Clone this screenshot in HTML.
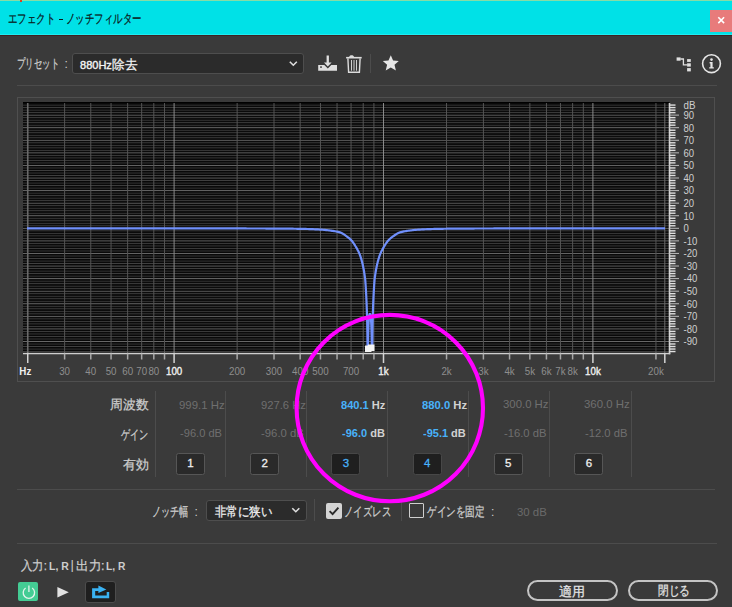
<!DOCTYPE html>
<html><head><meta charset="utf-8">
<style>
*{margin:0;padding:0;box-sizing:border-box}
html,body{width:732px;height:607px;overflow:hidden;background:#3a3a3a;font-family:"Liberation Sans",sans-serif}
.a{position:absolute;white-space:nowrap;line-height:normal}
.sep{position:absolute;background:#4c4c4c}
</style></head><body>
<div class="a" style="left:0;top:0;width:732px;height:1.5px;background:#86dca6"></div>
<div class="a" style="left:0;top:1px;width:732px;height:34px;background:#00e1e7"></div>
<div class="a" style="left:0;top:34px;width:732px;height:1px;background:#20eaf0"></div>
<div class="a" style="left:0;top:35px;width:732px;height:1px;background:#3d2222"></div>
<div class="a" style="left:19.5px;top:0;width:2px;height:1.5px;background:#e04020"></div>
<div class="a" style="left:710px;top:10px;width:22px;height:22px;background:#e87b7b"></div>
<svg class="a" style="left:710px;top:10px" width="22" height="22"><path d="M8.3 7.3 L14.1 13.1 M14.1 7.3 L8.3 13.1" stroke="#fff" stroke-width="1.6"/></svg>
<div class="a" style="left:72px;top:53px;width:232px;height:20.5px;background:#2b2b2b;border:1px solid #4e4e4e;border-radius:3px"></div>
<svg class="a" style="left:286px;top:57px" width="14" height="12"><path d="M3.8 4.8 L7.3 8.2 L10.8 4.8" fill="none" stroke="#dedede" stroke-width="1.6"/></svg>
<svg class="a" style="left:316px;top:53px" width="50" height="22">
 <path d="M10.6 2.4 H12.9 V9.5 H15.6 L11.8 13.4 L8 9.5 H10.6 Z" fill="#e0e0e0"/>
 <path d="M2.2 11.9 H8.3 L11.8 15.4 L15.3 11.9 H21 V17.7 H2.2 Z" fill="#e0e0e0"/>
 <rect x="4.2" y="13.3" width="1.6" height="1.6" fill="#3b3b3b"/>
 <path d="M33.2 4.2 C33.2 1.6 38 1.6 38 4.2 Z" fill="#dcdcdc"/>
 <rect x="30.1" y="3.9" width="15.6" height="1.6" fill="#dcdcdc"/>
 <path d="M31.9 5.4 L32.6 19.3 H43.4 L44.1 5.4" fill="none" stroke="#dcdcdc" stroke-width="1.4"/>
 <path d="M35.5 7 V17.7 M38 7 V17.7 M40.5 7 V17.7" stroke="#d0d0d0" stroke-width="1"/>
</svg>
<div class="sep" style="left:370px;top:54px;width:1px;height:19px"></div>
<svg class="a" style="left:380px;top:53px" width="22" height="22"><path d="M10.8 2.2 L13.1 7.6 L18.8 8.0 L14.5 11.7 L15.9 17.6 L10.8 14.4 L5.7 17.6 L7.1 11.7 L2.8 8.0 L8.5 7.6 Z" fill="#e6e6e6"/></svg>
<svg class="a" style="left:672px;top:53px" width="56" height="24">
 <rect x="4.6" y="4.4" width="4" height="3.3" fill="#e0e0e0"/>
 <path d="M8.4 6 H11.4 V11.8 H15.2" fill="none" stroke="#e0e0e0" stroke-width="1.3"/>
 <rect x="15.1" y="6.1" width="3.7" height="2.8" fill="#e0e0e0"/>
 <rect x="15.1" y="10.3" width="3.7" height="3.3" fill="#e0e0e0"/>
 <rect x="15.1" y="15.1" width="3.7" height="3.3" fill="#e0e0e0"/>
 <circle cx="39.5" cy="10.7" r="8.9" fill="none" stroke="#e6e6e6" stroke-width="1.6"/>
 <circle cx="39.5" cy="6.6" r="1.3" fill="#e6e6e6"/>
 <path d="M37.6 9 H40.6 V14.2 H41.8 V15.6 H37.2 V14.2 H38.4 V10.4 H37.6 Z" fill="#e6e6e6"/>
</svg>
<div class="sep" style="left:17px;top:84.5px;width:700px;height:1px"></div>
<div class="a" style="left:17px;top:97px;width:698px;height:285px;border:1px solid #4f4f4f"></div>
<svg class="a" style="left:0;top:0" width="732" height="607" font-family="Liberation Sans, sans-serif">
<rect x="23.0" y="102.0" width="646.5" height="251.5" fill="#000"/>
<line x1="23.0" x2="669.5" y1="352.79" y2="352.79" stroke="#0c0c0c" stroke-width="1"/>
<line x1="23.0" x2="669.5" y1="351.54" y2="351.54" stroke="#404040" stroke-width="1"/>
<line x1="23.0" x2="669.5" y1="350.28" y2="350.28" stroke="#0c0c0c" stroke-width="1"/>
<line x1="23.0" x2="669.5" y1="349.02" y2="349.02" stroke="#404040" stroke-width="1"/>
<line x1="23.0" x2="669.5" y1="347.76" y2="347.76" stroke="#0c0c0c" stroke-width="1"/>
<line x1="23.0" x2="669.5" y1="346.50" y2="346.50" stroke="#404040" stroke-width="1"/>
<line x1="23.0" x2="669.5" y1="345.25" y2="345.25" stroke="#0c0c0c" stroke-width="1"/>
<line x1="23.0" x2="669.5" y1="343.99" y2="343.99" stroke="#404040" stroke-width="1"/>
<line x1="23.0" x2="669.5" y1="342.73" y2="342.73" stroke="#0c0c0c" stroke-width="1"/>
<line x1="23.0" x2="669.5" y1="341.48" y2="341.48" stroke="#6a6a6a" stroke-width="1"/>
<line x1="23.0" x2="669.5" y1="340.22" y2="340.22" stroke="#0c0c0c" stroke-width="1"/>
<line x1="23.0" x2="669.5" y1="338.96" y2="338.96" stroke="#404040" stroke-width="1"/>
<line x1="23.0" x2="669.5" y1="337.70" y2="337.70" stroke="#0c0c0c" stroke-width="1"/>
<line x1="23.0" x2="669.5" y1="336.45" y2="336.45" stroke="#404040" stroke-width="1"/>
<line x1="23.0" x2="669.5" y1="335.19" y2="335.19" stroke="#0c0c0c" stroke-width="1"/>
<line x1="23.0" x2="669.5" y1="333.93" y2="333.93" stroke="#404040" stroke-width="1"/>
<line x1="23.0" x2="669.5" y1="332.67" y2="332.67" stroke="#0c0c0c" stroke-width="1"/>
<line x1="23.0" x2="669.5" y1="331.42" y2="331.42" stroke="#404040" stroke-width="1"/>
<line x1="23.0" x2="669.5" y1="330.16" y2="330.16" stroke="#0c0c0c" stroke-width="1"/>
<line x1="23.0" x2="669.5" y1="328.90" y2="328.90" stroke="#6a6a6a" stroke-width="1"/>
<line x1="23.0" x2="669.5" y1="327.64" y2="327.64" stroke="#0c0c0c" stroke-width="1"/>
<line x1="23.0" x2="669.5" y1="326.38" y2="326.38" stroke="#404040" stroke-width="1"/>
<line x1="23.0" x2="669.5" y1="325.13" y2="325.13" stroke="#0c0c0c" stroke-width="1"/>
<line x1="23.0" x2="669.5" y1="323.87" y2="323.87" stroke="#404040" stroke-width="1"/>
<line x1="23.0" x2="669.5" y1="322.61" y2="322.61" stroke="#0c0c0c" stroke-width="1"/>
<line x1="23.0" x2="669.5" y1="321.36" y2="321.36" stroke="#404040" stroke-width="1"/>
<line x1="23.0" x2="669.5" y1="320.10" y2="320.10" stroke="#0c0c0c" stroke-width="1"/>
<line x1="23.0" x2="669.5" y1="318.84" y2="318.84" stroke="#404040" stroke-width="1"/>
<line x1="23.0" x2="669.5" y1="317.58" y2="317.58" stroke="#0c0c0c" stroke-width="1"/>
<line x1="23.0" x2="669.5" y1="316.33" y2="316.33" stroke="#6a6a6a" stroke-width="1"/>
<line x1="23.0" x2="669.5" y1="315.07" y2="315.07" stroke="#0c0c0c" stroke-width="1"/>
<line x1="23.0" x2="669.5" y1="313.81" y2="313.81" stroke="#404040" stroke-width="1"/>
<line x1="23.0" x2="669.5" y1="312.55" y2="312.55" stroke="#0c0c0c" stroke-width="1"/>
<line x1="23.0" x2="669.5" y1="311.30" y2="311.30" stroke="#404040" stroke-width="1"/>
<line x1="23.0" x2="669.5" y1="310.04" y2="310.04" stroke="#0c0c0c" stroke-width="1"/>
<line x1="23.0" x2="669.5" y1="308.78" y2="308.78" stroke="#404040" stroke-width="1"/>
<line x1="23.0" x2="669.5" y1="307.52" y2="307.52" stroke="#0c0c0c" stroke-width="1"/>
<line x1="23.0" x2="669.5" y1="306.26" y2="306.26" stroke="#404040" stroke-width="1"/>
<line x1="23.0" x2="669.5" y1="305.01" y2="305.01" stroke="#0c0c0c" stroke-width="1"/>
<line x1="23.0" x2="669.5" y1="303.75" y2="303.75" stroke="#6a6a6a" stroke-width="1"/>
<line x1="23.0" x2="669.5" y1="302.49" y2="302.49" stroke="#0c0c0c" stroke-width="1"/>
<line x1="23.0" x2="669.5" y1="301.24" y2="301.24" stroke="#404040" stroke-width="1"/>
<line x1="23.0" x2="669.5" y1="299.98" y2="299.98" stroke="#0c0c0c" stroke-width="1"/>
<line x1="23.0" x2="669.5" y1="298.72" y2="298.72" stroke="#404040" stroke-width="1"/>
<line x1="23.0" x2="669.5" y1="297.46" y2="297.46" stroke="#0c0c0c" stroke-width="1"/>
<line x1="23.0" x2="669.5" y1="296.21" y2="296.21" stroke="#404040" stroke-width="1"/>
<line x1="23.0" x2="669.5" y1="294.95" y2="294.95" stroke="#0c0c0c" stroke-width="1"/>
<line x1="23.0" x2="669.5" y1="293.69" y2="293.69" stroke="#404040" stroke-width="1"/>
<line x1="23.0" x2="669.5" y1="292.43" y2="292.43" stroke="#0c0c0c" stroke-width="1"/>
<line x1="23.0" x2="669.5" y1="291.18" y2="291.18" stroke="#6a6a6a" stroke-width="1"/>
<line x1="23.0" x2="669.5" y1="289.92" y2="289.92" stroke="#0c0c0c" stroke-width="1"/>
<line x1="23.0" x2="669.5" y1="288.66" y2="288.66" stroke="#404040" stroke-width="1"/>
<line x1="23.0" x2="669.5" y1="287.40" y2="287.40" stroke="#0c0c0c" stroke-width="1"/>
<line x1="23.0" x2="669.5" y1="286.15" y2="286.15" stroke="#404040" stroke-width="1"/>
<line x1="23.0" x2="669.5" y1="284.89" y2="284.89" stroke="#0c0c0c" stroke-width="1"/>
<line x1="23.0" x2="669.5" y1="283.63" y2="283.63" stroke="#404040" stroke-width="1"/>
<line x1="23.0" x2="669.5" y1="282.37" y2="282.37" stroke="#0c0c0c" stroke-width="1"/>
<line x1="23.0" x2="669.5" y1="281.12" y2="281.12" stroke="#404040" stroke-width="1"/>
<line x1="23.0" x2="669.5" y1="279.86" y2="279.86" stroke="#0c0c0c" stroke-width="1"/>
<line x1="23.0" x2="669.5" y1="278.60" y2="278.60" stroke="#6a6a6a" stroke-width="1"/>
<line x1="23.0" x2="669.5" y1="277.34" y2="277.34" stroke="#0c0c0c" stroke-width="1"/>
<line x1="23.0" x2="669.5" y1="276.09" y2="276.09" stroke="#404040" stroke-width="1"/>
<line x1="23.0" x2="669.5" y1="274.83" y2="274.83" stroke="#0c0c0c" stroke-width="1"/>
<line x1="23.0" x2="669.5" y1="273.57" y2="273.57" stroke="#404040" stroke-width="1"/>
<line x1="23.0" x2="669.5" y1="272.31" y2="272.31" stroke="#0c0c0c" stroke-width="1"/>
<line x1="23.0" x2="669.5" y1="271.06" y2="271.06" stroke="#404040" stroke-width="1"/>
<line x1="23.0" x2="669.5" y1="269.80" y2="269.80" stroke="#0c0c0c" stroke-width="1"/>
<line x1="23.0" x2="669.5" y1="268.54" y2="268.54" stroke="#404040" stroke-width="1"/>
<line x1="23.0" x2="669.5" y1="267.28" y2="267.28" stroke="#0c0c0c" stroke-width="1"/>
<line x1="23.0" x2="669.5" y1="266.03" y2="266.03" stroke="#6a6a6a" stroke-width="1"/>
<line x1="23.0" x2="669.5" y1="264.77" y2="264.77" stroke="#0c0c0c" stroke-width="1"/>
<line x1="23.0" x2="669.5" y1="263.51" y2="263.51" stroke="#404040" stroke-width="1"/>
<line x1="23.0" x2="669.5" y1="262.25" y2="262.25" stroke="#0c0c0c" stroke-width="1"/>
<line x1="23.0" x2="669.5" y1="261.00" y2="261.00" stroke="#404040" stroke-width="1"/>
<line x1="23.0" x2="669.5" y1="259.74" y2="259.74" stroke="#0c0c0c" stroke-width="1"/>
<line x1="23.0" x2="669.5" y1="258.48" y2="258.48" stroke="#404040" stroke-width="1"/>
<line x1="23.0" x2="669.5" y1="257.22" y2="257.22" stroke="#0c0c0c" stroke-width="1"/>
<line x1="23.0" x2="669.5" y1="255.97" y2="255.97" stroke="#404040" stroke-width="1"/>
<line x1="23.0" x2="669.5" y1="254.71" y2="254.71" stroke="#0c0c0c" stroke-width="1"/>
<line x1="23.0" x2="669.5" y1="253.45" y2="253.45" stroke="#6a6a6a" stroke-width="1"/>
<line x1="23.0" x2="669.5" y1="252.19" y2="252.19" stroke="#0c0c0c" stroke-width="1"/>
<line x1="23.0" x2="669.5" y1="250.94" y2="250.94" stroke="#404040" stroke-width="1"/>
<line x1="23.0" x2="669.5" y1="249.68" y2="249.68" stroke="#0c0c0c" stroke-width="1"/>
<line x1="23.0" x2="669.5" y1="248.42" y2="248.42" stroke="#404040" stroke-width="1"/>
<line x1="23.0" x2="669.5" y1="247.16" y2="247.16" stroke="#0c0c0c" stroke-width="1"/>
<line x1="23.0" x2="669.5" y1="245.91" y2="245.91" stroke="#404040" stroke-width="1"/>
<line x1="23.0" x2="669.5" y1="244.65" y2="244.65" stroke="#0c0c0c" stroke-width="1"/>
<line x1="23.0" x2="669.5" y1="243.39" y2="243.39" stroke="#404040" stroke-width="1"/>
<line x1="23.0" x2="669.5" y1="242.13" y2="242.13" stroke="#0c0c0c" stroke-width="1"/>
<line x1="23.0" x2="669.5" y1="240.88" y2="240.88" stroke="#6a6a6a" stroke-width="1"/>
<line x1="23.0" x2="669.5" y1="239.62" y2="239.62" stroke="#0c0c0c" stroke-width="1"/>
<line x1="23.0" x2="669.5" y1="238.36" y2="238.36" stroke="#404040" stroke-width="1"/>
<line x1="23.0" x2="669.5" y1="237.10" y2="237.10" stroke="#0c0c0c" stroke-width="1"/>
<line x1="23.0" x2="669.5" y1="235.84" y2="235.84" stroke="#404040" stroke-width="1"/>
<line x1="23.0" x2="669.5" y1="234.59" y2="234.59" stroke="#0c0c0c" stroke-width="1"/>
<line x1="23.0" x2="669.5" y1="233.33" y2="233.33" stroke="#404040" stroke-width="1"/>
<line x1="23.0" x2="669.5" y1="232.07" y2="232.07" stroke="#0c0c0c" stroke-width="1"/>
<line x1="23.0" x2="669.5" y1="230.81" y2="230.81" stroke="#404040" stroke-width="1"/>
<line x1="23.0" x2="669.5" y1="229.56" y2="229.56" stroke="#0c0c0c" stroke-width="1"/>
<line x1="23.0" x2="669.5" y1="228.30" y2="228.30" stroke="#6a6a6a" stroke-width="1"/>
<line x1="23.0" x2="669.5" y1="227.04" y2="227.04" stroke="#0c0c0c" stroke-width="1"/>
<line x1="23.0" x2="669.5" y1="225.79" y2="225.79" stroke="#404040" stroke-width="1"/>
<line x1="23.0" x2="669.5" y1="224.53" y2="224.53" stroke="#0c0c0c" stroke-width="1"/>
<line x1="23.0" x2="669.5" y1="223.27" y2="223.27" stroke="#404040" stroke-width="1"/>
<line x1="23.0" x2="669.5" y1="222.01" y2="222.01" stroke="#0c0c0c" stroke-width="1"/>
<line x1="23.0" x2="669.5" y1="220.76" y2="220.76" stroke="#404040" stroke-width="1"/>
<line x1="23.0" x2="669.5" y1="219.50" y2="219.50" stroke="#0c0c0c" stroke-width="1"/>
<line x1="23.0" x2="669.5" y1="218.24" y2="218.24" stroke="#404040" stroke-width="1"/>
<line x1="23.0" x2="669.5" y1="216.98" y2="216.98" stroke="#0c0c0c" stroke-width="1"/>
<line x1="23.0" x2="669.5" y1="215.73" y2="215.73" stroke="#6a6a6a" stroke-width="1"/>
<line x1="23.0" x2="669.5" y1="214.47" y2="214.47" stroke="#0c0c0c" stroke-width="1"/>
<line x1="23.0" x2="669.5" y1="213.21" y2="213.21" stroke="#404040" stroke-width="1"/>
<line x1="23.0" x2="669.5" y1="211.95" y2="211.95" stroke="#0c0c0c" stroke-width="1"/>
<line x1="23.0" x2="669.5" y1="210.70" y2="210.70" stroke="#404040" stroke-width="1"/>
<line x1="23.0" x2="669.5" y1="209.44" y2="209.44" stroke="#0c0c0c" stroke-width="1"/>
<line x1="23.0" x2="669.5" y1="208.18" y2="208.18" stroke="#404040" stroke-width="1"/>
<line x1="23.0" x2="669.5" y1="206.92" y2="206.92" stroke="#0c0c0c" stroke-width="1"/>
<line x1="23.0" x2="669.5" y1="205.67" y2="205.67" stroke="#404040" stroke-width="1"/>
<line x1="23.0" x2="669.5" y1="204.41" y2="204.41" stroke="#0c0c0c" stroke-width="1"/>
<line x1="23.0" x2="669.5" y1="203.15" y2="203.15" stroke="#6a6a6a" stroke-width="1"/>
<line x1="23.0" x2="669.5" y1="201.89" y2="201.89" stroke="#0c0c0c" stroke-width="1"/>
<line x1="23.0" x2="669.5" y1="200.64" y2="200.64" stroke="#404040" stroke-width="1"/>
<line x1="23.0" x2="669.5" y1="199.38" y2="199.38" stroke="#0c0c0c" stroke-width="1"/>
<line x1="23.0" x2="669.5" y1="198.12" y2="198.12" stroke="#404040" stroke-width="1"/>
<line x1="23.0" x2="669.5" y1="196.86" y2="196.86" stroke="#0c0c0c" stroke-width="1"/>
<line x1="23.0" x2="669.5" y1="195.61" y2="195.61" stroke="#404040" stroke-width="1"/>
<line x1="23.0" x2="669.5" y1="194.35" y2="194.35" stroke="#0c0c0c" stroke-width="1"/>
<line x1="23.0" x2="669.5" y1="193.09" y2="193.09" stroke="#404040" stroke-width="1"/>
<line x1="23.0" x2="669.5" y1="191.83" y2="191.83" stroke="#0c0c0c" stroke-width="1"/>
<line x1="23.0" x2="669.5" y1="190.58" y2="190.58" stroke="#6a6a6a" stroke-width="1"/>
<line x1="23.0" x2="669.5" y1="189.32" y2="189.32" stroke="#0c0c0c" stroke-width="1"/>
<line x1="23.0" x2="669.5" y1="188.06" y2="188.06" stroke="#404040" stroke-width="1"/>
<line x1="23.0" x2="669.5" y1="186.80" y2="186.80" stroke="#0c0c0c" stroke-width="1"/>
<line x1="23.0" x2="669.5" y1="185.55" y2="185.55" stroke="#404040" stroke-width="1"/>
<line x1="23.0" x2="669.5" y1="184.29" y2="184.29" stroke="#0c0c0c" stroke-width="1"/>
<line x1="23.0" x2="669.5" y1="183.03" y2="183.03" stroke="#404040" stroke-width="1"/>
<line x1="23.0" x2="669.5" y1="181.77" y2="181.77" stroke="#0c0c0c" stroke-width="1"/>
<line x1="23.0" x2="669.5" y1="180.52" y2="180.52" stroke="#404040" stroke-width="1"/>
<line x1="23.0" x2="669.5" y1="179.26" y2="179.26" stroke="#0c0c0c" stroke-width="1"/>
<line x1="23.0" x2="669.5" y1="178.00" y2="178.00" stroke="#6a6a6a" stroke-width="1"/>
<line x1="23.0" x2="669.5" y1="176.74" y2="176.74" stroke="#0c0c0c" stroke-width="1"/>
<line x1="23.0" x2="669.5" y1="175.49" y2="175.49" stroke="#404040" stroke-width="1"/>
<line x1="23.0" x2="669.5" y1="174.23" y2="174.23" stroke="#0c0c0c" stroke-width="1"/>
<line x1="23.0" x2="669.5" y1="172.97" y2="172.97" stroke="#404040" stroke-width="1"/>
<line x1="23.0" x2="669.5" y1="171.71" y2="171.71" stroke="#0c0c0c" stroke-width="1"/>
<line x1="23.0" x2="669.5" y1="170.46" y2="170.46" stroke="#404040" stroke-width="1"/>
<line x1="23.0" x2="669.5" y1="169.20" y2="169.20" stroke="#0c0c0c" stroke-width="1"/>
<line x1="23.0" x2="669.5" y1="167.94" y2="167.94" stroke="#404040" stroke-width="1"/>
<line x1="23.0" x2="669.5" y1="166.68" y2="166.68" stroke="#0c0c0c" stroke-width="1"/>
<line x1="23.0" x2="669.5" y1="165.43" y2="165.43" stroke="#6a6a6a" stroke-width="1"/>
<line x1="23.0" x2="669.5" y1="164.17" y2="164.17" stroke="#0c0c0c" stroke-width="1"/>
<line x1="23.0" x2="669.5" y1="162.91" y2="162.91" stroke="#404040" stroke-width="1"/>
<line x1="23.0" x2="669.5" y1="161.65" y2="161.65" stroke="#0c0c0c" stroke-width="1"/>
<line x1="23.0" x2="669.5" y1="160.40" y2="160.40" stroke="#404040" stroke-width="1"/>
<line x1="23.0" x2="669.5" y1="159.14" y2="159.14" stroke="#0c0c0c" stroke-width="1"/>
<line x1="23.0" x2="669.5" y1="157.88" y2="157.88" stroke="#404040" stroke-width="1"/>
<line x1="23.0" x2="669.5" y1="156.62" y2="156.62" stroke="#0c0c0c" stroke-width="1"/>
<line x1="23.0" x2="669.5" y1="155.37" y2="155.37" stroke="#404040" stroke-width="1"/>
<line x1="23.0" x2="669.5" y1="154.11" y2="154.11" stroke="#0c0c0c" stroke-width="1"/>
<line x1="23.0" x2="669.5" y1="152.85" y2="152.85" stroke="#6a6a6a" stroke-width="1"/>
<line x1="23.0" x2="669.5" y1="151.59" y2="151.59" stroke="#0c0c0c" stroke-width="1"/>
<line x1="23.0" x2="669.5" y1="150.34" y2="150.34" stroke="#404040" stroke-width="1"/>
<line x1="23.0" x2="669.5" y1="149.08" y2="149.08" stroke="#0c0c0c" stroke-width="1"/>
<line x1="23.0" x2="669.5" y1="147.82" y2="147.82" stroke="#404040" stroke-width="1"/>
<line x1="23.0" x2="669.5" y1="146.56" y2="146.56" stroke="#0c0c0c" stroke-width="1"/>
<line x1="23.0" x2="669.5" y1="145.31" y2="145.31" stroke="#404040" stroke-width="1"/>
<line x1="23.0" x2="669.5" y1="144.05" y2="144.05" stroke="#0c0c0c" stroke-width="1"/>
<line x1="23.0" x2="669.5" y1="142.79" y2="142.79" stroke="#404040" stroke-width="1"/>
<line x1="23.0" x2="669.5" y1="141.53" y2="141.53" stroke="#0c0c0c" stroke-width="1"/>
<line x1="23.0" x2="669.5" y1="140.28" y2="140.28" stroke="#6a6a6a" stroke-width="1"/>
<line x1="23.0" x2="669.5" y1="139.02" y2="139.02" stroke="#0c0c0c" stroke-width="1"/>
<line x1="23.0" x2="669.5" y1="137.76" y2="137.76" stroke="#404040" stroke-width="1"/>
<line x1="23.0" x2="669.5" y1="136.50" y2="136.50" stroke="#0c0c0c" stroke-width="1"/>
<line x1="23.0" x2="669.5" y1="135.25" y2="135.25" stroke="#404040" stroke-width="1"/>
<line x1="23.0" x2="669.5" y1="133.99" y2="133.99" stroke="#0c0c0c" stroke-width="1"/>
<line x1="23.0" x2="669.5" y1="132.73" y2="132.73" stroke="#404040" stroke-width="1"/>
<line x1="23.0" x2="669.5" y1="131.47" y2="131.47" stroke="#0c0c0c" stroke-width="1"/>
<line x1="23.0" x2="669.5" y1="130.22" y2="130.22" stroke="#404040" stroke-width="1"/>
<line x1="23.0" x2="669.5" y1="128.96" y2="128.96" stroke="#0c0c0c" stroke-width="1"/>
<line x1="23.0" x2="669.5" y1="127.70" y2="127.70" stroke="#6a6a6a" stroke-width="1"/>
<line x1="23.0" x2="669.5" y1="126.44" y2="126.44" stroke="#0c0c0c" stroke-width="1"/>
<line x1="23.0" x2="669.5" y1="125.19" y2="125.19" stroke="#404040" stroke-width="1"/>
<line x1="23.0" x2="669.5" y1="123.93" y2="123.93" stroke="#0c0c0c" stroke-width="1"/>
<line x1="23.0" x2="669.5" y1="122.67" y2="122.67" stroke="#404040" stroke-width="1"/>
<line x1="23.0" x2="669.5" y1="121.41" y2="121.41" stroke="#0c0c0c" stroke-width="1"/>
<line x1="23.0" x2="669.5" y1="120.16" y2="120.16" stroke="#404040" stroke-width="1"/>
<line x1="23.0" x2="669.5" y1="118.90" y2="118.90" stroke="#0c0c0c" stroke-width="1"/>
<line x1="23.0" x2="669.5" y1="117.64" y2="117.64" stroke="#404040" stroke-width="1"/>
<line x1="23.0" x2="669.5" y1="116.38" y2="116.38" stroke="#0c0c0c" stroke-width="1"/>
<line x1="23.0" x2="669.5" y1="115.12" y2="115.12" stroke="#6a6a6a" stroke-width="1"/>
<line x1="23.0" x2="669.5" y1="113.87" y2="113.87" stroke="#0c0c0c" stroke-width="1"/>
<line x1="23.0" x2="669.5" y1="112.61" y2="112.61" stroke="#404040" stroke-width="1"/>
<line x1="23.0" x2="669.5" y1="111.35" y2="111.35" stroke="#0c0c0c" stroke-width="1"/>
<line x1="23.0" x2="669.5" y1="110.09" y2="110.09" stroke="#404040" stroke-width="1"/>
<line x1="23.0" x2="669.5" y1="108.84" y2="108.84" stroke="#0c0c0c" stroke-width="1"/>
<line x1="23.0" x2="669.5" y1="107.58" y2="107.58" stroke="#404040" stroke-width="1"/>
<line x1="23.0" x2="669.5" y1="106.32" y2="106.32" stroke="#0c0c0c" stroke-width="1"/>
<line x1="23.0" x2="669.5" y1="105.07" y2="105.07" stroke="#404040" stroke-width="1"/>
<line x1="23.0" x2="669.5" y1="103.81" y2="103.81" stroke="#0c0c0c" stroke-width="1"/>
<line x1="27.74" x2="27.74" y1="103.0" y2="353.5" stroke="#6a6a6a" stroke-width="1.6"/>
<line x1="64.61" x2="64.61" y1="103.0" y2="353.5" stroke="#555555" stroke-width="1"/>
<line x1="90.77" x2="90.77" y1="103.0" y2="353.5" stroke="#555555" stroke-width="1"/>
<line x1="111.06" x2="111.06" y1="103.0" y2="353.5" stroke="#555555" stroke-width="1"/>
<line x1="127.64" x2="127.64" y1="103.0" y2="353.5" stroke="#555555" stroke-width="1"/>
<line x1="141.66" x2="141.66" y1="103.0" y2="353.5" stroke="#555555" stroke-width="1"/>
<line x1="153.81" x2="153.81" y1="103.0" y2="353.5" stroke="#555555" stroke-width="1"/>
<line x1="164.52" x2="164.52" y1="103.0" y2="353.5" stroke="#555555" stroke-width="1"/>
<line x1="174.10" x2="174.10" y1="103.0" y2="353.5" stroke="#8a8a8a" stroke-width="1"/>
<line x1="237.14" x2="237.14" y1="103.0" y2="353.5" stroke="#555555" stroke-width="1"/>
<line x1="274.01" x2="274.01" y1="103.0" y2="353.5" stroke="#555555" stroke-width="1"/>
<line x1="300.17" x2="300.17" y1="103.0" y2="353.5" stroke="#555555" stroke-width="1"/>
<line x1="320.46" x2="320.46" y1="103.0" y2="353.5" stroke="#555555" stroke-width="1"/>
<line x1="337.04" x2="337.04" y1="103.0" y2="353.5" stroke="#555555" stroke-width="1"/>
<line x1="351.06" x2="351.06" y1="103.0" y2="353.5" stroke="#555555" stroke-width="1"/>
<line x1="363.21" x2="363.21" y1="103.0" y2="353.5" stroke="#555555" stroke-width="1"/>
<line x1="373.92" x2="373.92" y1="103.0" y2="353.5" stroke="#555555" stroke-width="1"/>
<line x1="383.50" x2="383.50" y1="103.0" y2="353.5" stroke="#8a8a8a" stroke-width="1"/>
<line x1="446.54" x2="446.54" y1="103.0" y2="353.5" stroke="#555555" stroke-width="1"/>
<line x1="483.41" x2="483.41" y1="103.0" y2="353.5" stroke="#555555" stroke-width="1"/>
<line x1="509.57" x2="509.57" y1="103.0" y2="353.5" stroke="#555555" stroke-width="1"/>
<line x1="529.86" x2="529.86" y1="103.0" y2="353.5" stroke="#555555" stroke-width="1"/>
<line x1="546.44" x2="546.44" y1="103.0" y2="353.5" stroke="#555555" stroke-width="1"/>
<line x1="560.46" x2="560.46" y1="103.0" y2="353.5" stroke="#555555" stroke-width="1"/>
<line x1="572.61" x2="572.61" y1="103.0" y2="353.5" stroke="#555555" stroke-width="1"/>
<line x1="583.32" x2="583.32" y1="103.0" y2="353.5" stroke="#555555" stroke-width="1"/>
<line x1="592.90" x2="592.90" y1="103.0" y2="353.5" stroke="#8a8a8a" stroke-width="1"/>
<line x1="655.94" x2="655.94" y1="103.0" y2="353.5" stroke="#555555" stroke-width="1"/>
<line x1="664.81" x2="664.81" y1="103.0" y2="353.5" stroke="#6a6a6a" stroke-width="1"/>
<polyline points="27.00,228.40 28.00,228.40 29.00,228.40 30.00,228.40 31.00,228.40 32.00,228.40 33.00,228.40 34.00,228.40 35.00,228.40 36.00,228.40 37.00,228.40 38.00,228.40 39.00,228.40 40.00,228.40 41.00,228.40 42.00,228.40 43.00,228.40 44.00,228.40 45.00,228.40 46.00,228.40 47.00,228.40 48.00,228.40 49.00,228.40 50.00,228.40 51.00,228.40 52.00,228.40 53.00,228.40 54.00,228.40 55.00,228.40 56.00,228.40 57.00,228.40 58.00,228.40 59.00,228.40 60.00,228.40 61.00,228.40 62.00,228.40 63.00,228.40 64.00,228.40 65.00,228.40 66.00,228.40 67.00,228.40 68.00,228.40 69.00,228.40 70.00,228.40 71.00,228.40 72.00,228.40 73.00,228.40 74.00,228.40 75.00,228.40 76.00,228.40 77.00,228.40 78.00,228.40 79.00,228.40 80.00,228.40 81.00,228.40 82.00,228.40 83.00,228.40 84.00,228.40 85.00,228.40 86.00,228.40 87.00,228.40 88.00,228.40 89.00,228.40 90.00,228.40 91.00,228.40 92.00,228.40 93.00,228.40 94.00,228.40 95.00,228.40 96.00,228.40 97.00,228.40 98.00,228.40 99.00,228.40 100.00,228.40 101.00,228.40 102.00,228.40 103.00,228.40 104.00,228.40 105.00,228.40 106.00,228.40 107.00,228.40 108.00,228.40 109.00,228.40 110.00,228.40 111.00,228.40 112.00,228.40 113.00,228.40 114.00,228.40 115.00,228.40 116.00,228.40 117.00,228.40 118.00,228.40 119.00,228.40 120.00,228.40 121.00,228.40 122.00,228.40 123.00,228.40 124.00,228.40 125.00,228.40 126.00,228.40 127.00,228.40 128.00,228.40 129.00,228.40 130.00,228.40 131.00,228.40 132.00,228.40 133.00,228.40 134.00,228.40 135.00,228.40 136.00,228.40 137.00,228.40 138.00,228.40 139.00,228.40 140.00,228.40 141.00,228.40 142.00,228.40 143.00,228.40 144.00,228.40 145.00,228.40 146.00,228.40 147.00,228.40 148.00,228.40 149.00,228.40 150.00,228.40 151.00,228.40 152.00,228.40 153.00,228.40 154.00,228.40 155.00,228.40 156.00,228.40 157.00,228.40 158.00,228.40 159.00,228.40 160.00,228.40 161.00,228.40 162.00,228.40 163.00,228.40 164.00,228.40 165.00,228.40 166.00,228.40 167.00,228.40 168.00,228.40 169.00,228.40 170.00,228.40 171.00,228.40 172.00,228.40 173.00,228.40 174.00,228.40 175.00,228.40 176.00,228.40 177.00,228.40 178.00,228.40 179.00,228.40 180.00,228.40 181.00,228.40 182.00,228.40 183.00,228.40 184.00,228.40 185.00,228.40 186.00,228.40 187.00,228.40 188.00,228.40 189.00,228.40 190.00,228.40 191.00,228.40 192.00,228.40 193.00,228.40 194.00,228.40 195.00,228.40 196.00,228.40 197.00,228.40 198.00,228.40 199.00,228.40 200.00,228.40 201.00,228.40 202.00,228.40 203.00,228.40 204.00,228.40 205.00,228.40 206.00,228.40 207.00,228.40 208.00,228.40 209.00,228.40 210.00,228.40 211.00,228.40 212.00,228.40 213.00,228.40 214.00,228.40 215.00,228.40 216.00,228.40 217.00,228.40 218.00,228.40 219.00,228.40 220.00,228.40 221.00,228.40 222.00,228.40 223.00,228.40 224.00,228.40 225.00,228.40 226.00,228.40 227.00,228.40 228.00,228.40 229.00,228.40 230.00,228.45 231.00,228.45 232.00,228.45 233.00,228.45 234.00,228.45 235.00,228.46 236.00,228.46 237.00,228.46 238.00,228.46 239.00,228.46 240.00,228.46 241.00,228.47 242.00,228.47 243.00,228.47 244.00,228.47 245.00,228.47 246.00,228.47 247.00,228.48 248.00,228.48 249.00,228.48 250.00,228.48 251.00,228.48 252.00,228.49 253.00,228.49 254.00,228.49 255.00,228.49 256.00,228.50 257.00,228.50 258.00,228.50 259.00,228.50 260.00,228.51 261.00,228.51 262.00,228.51 263.00,228.52 264.00,228.52 265.00,228.52 266.00,228.53 267.00,228.53 268.00,228.54 269.00,228.54 270.00,228.54 271.00,228.55 272.00,228.55 273.00,228.56 274.00,228.56 275.00,228.57 276.00,228.58 277.00,228.58 278.00,228.59 279.00,228.59 280.00,228.60 281.00,228.61 282.00,228.62 283.00,228.62 284.00,228.63 285.00,228.64 286.00,228.65 287.00,228.66 288.00,228.67 289.00,228.68 290.00,228.69 291.00,228.70 292.00,228.71 293.00,228.72 294.00,228.74 295.00,228.75 296.00,228.77 297.00,228.78 298.00,228.80 299.00,228.82 300.00,228.83 301.00,228.85 302.00,228.87 303.00,228.90 304.00,228.92 305.00,228.94 306.00,228.97 307.00,228.99 308.00,229.02 309.00,229.05 310.00,229.09 311.00,229.12 312.00,229.16 313.00,229.19 314.00,229.24 315.00,229.28 316.00,229.33 317.00,229.38 318.00,229.43 319.00,229.49 320.00,229.55 321.00,229.62 322.00,229.69 323.00,229.76 324.00,229.85 325.00,229.94 326.00,230.03 327.00,230.14 328.00,230.26 329.00,230.38 330.00,230.51 331.00,230.66 332.00,230.81 333.00,230.96 334.00,231.12 335.00,231.29 336.00,231.46 337.00,231.65 338.00,231.86 339.00,232.11 340.00,232.40 341.00,232.77 342.00,233.24 343.00,233.80 344.00,234.45 345.00,235.16 346.00,235.87 347.00,236.57 348.00,237.31 349.00,238.09 350.00,238.94 351.00,239.90 352.00,241.03 353.00,242.32 354.00,243.78 355.00,245.37 355.10,245.53 355.20,245.70 355.30,245.87 355.40,246.03 355.50,246.20 355.60,246.37 355.70,246.53 355.80,246.70 355.90,246.87 356.00,247.04 356.10,247.20 356.20,247.37 356.30,247.54 356.40,247.72 356.50,247.89 356.60,248.06 356.70,248.23 356.80,248.41 356.90,248.58 357.00,248.76 357.10,248.94 357.20,249.12 357.30,249.30 357.40,249.48 357.50,249.67 357.60,249.85 357.70,250.04 357.80,250.22 357.90,250.42 358.00,250.61 358.10,250.80 358.20,251.00 358.30,251.20 358.40,251.40 358.50,251.60 358.60,251.81 358.70,252.02 358.80,252.23 358.90,252.45 359.00,252.67 359.10,252.89 359.20,253.12 359.30,253.35 359.40,253.59 359.50,253.84 359.60,254.08 359.70,254.34 359.80,254.60 359.90,254.87 360.00,255.14 360.10,255.41 360.20,255.70 360.30,255.98 360.40,256.27 360.50,256.57 360.60,256.87 360.70,257.18 360.80,257.49 360.90,257.81 361.00,258.14 361.10,258.47 361.20,258.80 361.30,259.14 361.40,259.49 361.50,259.85 361.60,260.21 361.70,260.57 361.80,260.95 361.90,261.32 362.00,261.71 362.10,262.10 362.20,262.50 362.30,262.91 362.40,263.32 362.50,263.74 362.60,264.17 362.70,264.60 362.80,265.05 362.90,265.51 363.00,265.97 363.10,266.44 363.20,266.93 363.30,267.42 363.40,267.93 363.50,268.44 363.60,268.97 363.70,269.51 363.80,270.06 363.90,270.62 364.00,271.20 364.10,271.79 364.20,272.40 364.30,273.02 364.40,273.65 364.50,274.30 364.60,274.97 364.70,275.65 364.80,276.34 364.90,277.05 365.00,277.78 365.10,278.53 365.20,279.32 365.30,280.62 365.40,281.97 365.50,283.36 365.60,284.80 365.70,286.30 365.80,287.87 365.90,289.50 366.00,291.20 366.10,292.99 366.20,294.87 366.30,296.86 366.40,298.96 366.50,301.19 366.60,303.59 366.70,306.16 366.80,308.95 366.90,312.01 367.00,315.40 367.10,319.20 367.20,323.57 367.30,328.71 367.40,335.02 367.50,343.28 367.60,346.90 367.70,346.90 367.80,346.90 367.90,346.90 368.00,346.43 368.10,339.43 368.20,334.39 368.30,330.52 368.40,327.43 368.50,324.91 368.60,322.83 368.70,321.08 368.80,319.60 368.90,318.36 369.00,317.32 369.10,316.45 369.20,315.74 369.30,315.16 369.40,314.71 369.50,314.38 369.60,314.16 369.70,314.05 369.80,314.04 369.90,314.14 370.00,314.04 370.10,314.05 370.20,314.16 370.30,314.38 370.40,314.71 370.50,315.16 370.60,315.74 370.70,316.45 370.80,317.32 370.90,318.36 371.00,319.60 371.10,321.08 371.20,322.83 371.30,324.91 371.40,327.43 371.50,330.52 371.60,334.39 371.70,339.43 371.80,346.43 371.90,346.90 372.00,346.90 372.10,346.90 372.20,346.90 372.30,343.28 372.40,335.02 372.50,328.71 372.60,323.57 372.70,319.20 372.80,315.40 372.90,312.01 373.00,308.95 373.10,306.16 373.20,303.59 373.30,301.19 373.40,298.96 373.50,296.86 373.60,294.87 373.70,292.99 373.80,291.20 373.90,289.50 374.00,287.87 374.10,286.30 374.20,284.80 374.30,283.36 374.40,281.97 374.50,280.62 374.60,279.30 374.70,278.53 374.80,277.78 374.90,277.05 375.00,276.34 375.10,275.65 375.20,274.97 375.30,274.30 375.40,273.65 375.50,273.02 375.60,272.40 375.70,271.79 375.80,271.20 375.90,270.62 376.00,270.06 376.10,269.51 376.20,268.97 376.30,268.44 376.40,267.93 376.50,267.42 376.60,266.93 376.70,266.44 376.80,265.97 376.90,265.51 377.00,265.05 377.10,264.60 377.20,264.17 377.30,263.74 377.40,263.32 377.50,262.91 377.60,262.50 377.70,262.10 377.80,261.71 377.90,261.32 378.00,260.95 378.10,260.57 378.20,260.21 378.30,259.85 378.40,259.49 378.50,259.14 378.60,258.80 378.70,258.47 378.80,258.14 378.90,257.81 379.00,257.49 379.10,257.18 379.20,256.87 379.30,256.57 379.40,256.27 379.50,255.98 379.60,255.70 379.70,255.41 379.80,255.14 379.90,254.87 380.00,254.60 380.10,254.34 380.20,254.08 380.30,253.84 380.40,253.59 380.50,253.35 380.60,253.12 380.70,252.89 380.80,252.67 380.90,252.45 381.00,252.23 381.10,252.02 381.20,251.81 381.30,251.60 381.40,251.40 381.50,251.20 381.60,251.00 381.70,250.80 381.80,250.61 381.90,250.42 382.00,250.22 382.10,250.04 382.20,249.85 382.30,249.67 382.40,249.48 382.50,249.30 382.60,249.12 382.70,248.94 382.80,248.76 382.90,248.58 383.00,248.41 383.10,248.23 383.20,248.06 383.30,247.89 383.40,247.72 383.50,247.54 383.60,247.37 383.70,247.20 383.80,247.04 383.90,246.87 384.00,246.70 384.10,246.53 384.20,246.37 384.30,246.20 384.40,246.03 384.50,245.87 384.60,245.70 384.70,245.53 384.80,245.37 384.90,245.20 385.00,245.04 386.00,243.47 387.00,242.05 388.00,240.79 389.00,239.70 390.00,238.76 391.00,237.93 392.00,237.16 393.00,236.43 394.00,235.73 395.00,235.02 396.00,234.31 397.00,233.68 398.00,233.13 399.00,232.69 400.00,232.34 401.00,232.06 402.00,231.82 403.00,231.61 404.00,231.43 405.00,231.26 406.00,231.09 407.00,230.93 408.00,230.78 409.00,230.63 410.00,230.49 411.00,230.35 412.00,230.23 413.00,230.12 414.00,230.01 415.00,229.92 416.00,229.83 417.00,229.75 418.00,229.67 419.00,229.60 420.00,229.54 421.00,229.48 422.00,229.42 423.00,229.37 424.00,229.32 425.00,229.27 426.00,229.23 427.00,229.19 428.00,229.15 429.00,229.11 430.00,229.08 431.00,229.05 432.00,229.02 433.00,228.99 434.00,228.96 435.00,228.94 436.00,228.91 437.00,228.89 438.00,228.87 439.00,228.85 440.00,228.83 441.00,228.81 442.00,228.80 443.00,228.78 444.00,228.76 445.00,228.75 446.00,228.74 447.00,228.72 448.00,228.71 449.00,228.70 450.00,228.69 451.00,228.68 452.00,228.67 453.00,228.66 454.00,228.65 455.00,228.64 456.00,228.63 457.00,228.62 458.00,228.61 459.00,228.61 460.00,228.60 461.00,228.59 462.00,228.59 463.00,228.58 464.00,228.57 465.00,228.57 466.00,228.56 467.00,228.56 468.00,228.55 469.00,228.55 470.00,228.54 471.00,228.54 472.00,228.54 473.00,228.53 474.00,228.53 475.00,228.52 476.00,228.52 477.00,228.52 478.00,228.51 479.00,228.51 480.00,228.51 481.00,228.50 482.00,228.50 483.00,228.50 484.00,228.50 485.00,228.49 486.00,228.49 487.00,228.49 488.00,228.49 489.00,228.48 490.00,228.48 491.00,228.48 492.00,228.48 493.00,228.48 494.00,228.47 495.00,228.47 496.00,228.47 497.00,228.47 498.00,228.47 499.00,228.46 500.00,228.46 501.00,228.46 502.00,228.46 503.00,228.46 504.00,228.46 505.00,228.46 506.00,228.45 507.00,228.45 508.00,228.45 509.00,228.45 510.00,228.40 511.00,228.40 512.00,228.40 513.00,228.40 514.00,228.40 515.00,228.40 516.00,228.40 517.00,228.40 518.00,228.40 519.00,228.40 520.00,228.40 521.00,228.40 522.00,228.40 523.00,228.40 524.00,228.40 525.00,228.40 526.00,228.40 527.00,228.40 528.00,228.40 529.00,228.40 530.00,228.40 531.00,228.40 532.00,228.40 533.00,228.40 534.00,228.40 535.00,228.40 536.00,228.40 537.00,228.40 538.00,228.40 539.00,228.40 540.00,228.40 541.00,228.40 542.00,228.40 543.00,228.40 544.00,228.40 545.00,228.40 546.00,228.40 547.00,228.40 548.00,228.40 549.00,228.40 550.00,228.40 551.00,228.40 552.00,228.40 553.00,228.40 554.00,228.40 555.00,228.40 556.00,228.40 557.00,228.40 558.00,228.40 559.00,228.40 560.00,228.40 561.00,228.40 562.00,228.40 563.00,228.40 564.00,228.40 565.00,228.40 566.00,228.40 567.00,228.40 568.00,228.40 569.00,228.40 570.00,228.40 571.00,228.40 572.00,228.40 573.00,228.40 574.00,228.40 575.00,228.40 576.00,228.40 577.00,228.40 578.00,228.40 579.00,228.40 580.00,228.40 581.00,228.40 582.00,228.40 583.00,228.40 584.00,228.40 585.00,228.40 586.00,228.40 587.00,228.40 588.00,228.40 589.00,228.40 590.00,228.40 591.00,228.40 592.00,228.40 593.00,228.40 594.00,228.40 595.00,228.40 596.00,228.40 597.00,228.40 598.00,228.40 599.00,228.40 600.00,228.40 601.00,228.40 602.00,228.40 603.00,228.40 604.00,228.40 605.00,228.40 606.00,228.40 607.00,228.40 608.00,228.40 609.00,228.40 610.00,228.40 611.00,228.40 612.00,228.40 613.00,228.40 614.00,228.40 615.00,228.40 616.00,228.40 617.00,228.40 618.00,228.40 619.00,228.40 620.00,228.40 621.00,228.40 622.00,228.40 623.00,228.40 624.00,228.40 625.00,228.40 626.00,228.40 627.00,228.40 628.00,228.40 629.00,228.40 630.00,228.40 631.00,228.40 632.00,228.40 633.00,228.40 634.00,228.40 635.00,228.40 636.00,228.40 637.00,228.40 638.00,228.40 639.00,228.40 640.00,228.40 641.00,228.40 642.00,228.40 643.00,228.40 644.00,228.40 645.00,228.40 646.00,228.40 647.00,228.40 648.00,228.40 649.00,228.40 650.00,228.40 651.00,228.40 652.00,228.40 653.00,228.40 654.00,228.40 655.00,228.40 656.00,228.40 657.00,228.40 658.00,228.40 659.00,228.40 660.00,228.40 661.00,228.40 662.00,228.40 663.00,228.40 664.00,228.40 665.00,228.40" fill="none" stroke="#7090fc" stroke-width="2.2" stroke-linejoin="round"/>
<rect x="365" y="345.5" width="6.5" height="6.5" fill="#f4f4f4"/>
<rect x="368" y="344.5" width="6.5" height="6.5" fill="#f4f4f4"/>
<line x1="23.0" x2="670.3" y1="353.5" y2="353.5" stroke="#cfcfcf" stroke-width="1.6"/>
<line x1="669.5" x2="669.5" y1="103.0" y2="354.3" stroke="#cfcfcf" stroke-width="1.6"/>
<line x1="27.74" x2="27.74" y1="353.5" y2="363.0" stroke="#d4d4d4" stroke-width="1.5"/>
<line x1="64.61" x2="64.61" y1="353.5" y2="359.5" stroke="#a8a8a8" stroke-width="1.5"/>
<line x1="90.77" x2="90.77" y1="353.5" y2="359.5" stroke="#a8a8a8" stroke-width="1.5"/>
<line x1="111.06" x2="111.06" y1="353.5" y2="359.5" stroke="#a8a8a8" stroke-width="1.5"/>
<line x1="127.64" x2="127.64" y1="353.5" y2="359.5" stroke="#a8a8a8" stroke-width="1.5"/>
<line x1="141.66" x2="141.66" y1="353.5" y2="359.5" stroke="#a8a8a8" stroke-width="1.5"/>
<line x1="153.81" x2="153.81" y1="353.5" y2="359.5" stroke="#a8a8a8" stroke-width="1.5"/>
<line x1="164.52" x2="164.52" y1="353.5" y2="359.5" stroke="#a8a8a8" stroke-width="1.5"/>
<line x1="174.10" x2="174.10" y1="353.5" y2="363.0" stroke="#d4d4d4" stroke-width="1.5"/>
<line x1="237.14" x2="237.14" y1="353.5" y2="359.5" stroke="#a8a8a8" stroke-width="1.5"/>
<line x1="274.01" x2="274.01" y1="353.5" y2="359.5" stroke="#a8a8a8" stroke-width="1.5"/>
<line x1="300.17" x2="300.17" y1="353.5" y2="359.5" stroke="#a8a8a8" stroke-width="1.5"/>
<line x1="320.46" x2="320.46" y1="353.5" y2="359.5" stroke="#a8a8a8" stroke-width="1.5"/>
<line x1="337.04" x2="337.04" y1="353.5" y2="359.5" stroke="#a8a8a8" stroke-width="1.5"/>
<line x1="351.06" x2="351.06" y1="353.5" y2="359.5" stroke="#a8a8a8" stroke-width="1.5"/>
<line x1="363.21" x2="363.21" y1="353.5" y2="359.5" stroke="#a8a8a8" stroke-width="1.5"/>
<line x1="373.92" x2="373.92" y1="353.5" y2="359.5" stroke="#a8a8a8" stroke-width="1.5"/>
<line x1="383.50" x2="383.50" y1="353.5" y2="363.0" stroke="#d4d4d4" stroke-width="1.5"/>
<line x1="446.54" x2="446.54" y1="353.5" y2="359.5" stroke="#a8a8a8" stroke-width="1.5"/>
<line x1="483.41" x2="483.41" y1="353.5" y2="359.5" stroke="#a8a8a8" stroke-width="1.5"/>
<line x1="509.57" x2="509.57" y1="353.5" y2="359.5" stroke="#a8a8a8" stroke-width="1.5"/>
<line x1="529.86" x2="529.86" y1="353.5" y2="359.5" stroke="#a8a8a8" stroke-width="1.5"/>
<line x1="546.44" x2="546.44" y1="353.5" y2="359.5" stroke="#a8a8a8" stroke-width="1.5"/>
<line x1="560.46" x2="560.46" y1="353.5" y2="359.5" stroke="#a8a8a8" stroke-width="1.5"/>
<line x1="572.61" x2="572.61" y1="353.5" y2="359.5" stroke="#a8a8a8" stroke-width="1.5"/>
<line x1="583.32" x2="583.32" y1="353.5" y2="359.5" stroke="#a8a8a8" stroke-width="1.5"/>
<line x1="592.90" x2="592.90" y1="353.5" y2="363.0" stroke="#d4d4d4" stroke-width="1.5"/>
<line x1="655.94" x2="655.94" y1="353.5" y2="359.5" stroke="#a8a8a8" stroke-width="1.5"/>
<line x1="664.81" x2="664.81" y1="353.5" y2="363.0" stroke="#d4d4d4" stroke-width="1.5"/>
<line x1="669.5" x2="675.5" y1="351.54" y2="351.54" stroke="#e0e0e0" stroke-width="1.4"/>
<line x1="669.5" x2="675.5" y1="349.02" y2="349.02" stroke="#e0e0e0" stroke-width="1.4"/>
<line x1="669.5" x2="675.5" y1="346.50" y2="346.50" stroke="#e0e0e0" stroke-width="1.4"/>
<line x1="669.5" x2="675.5" y1="343.99" y2="343.99" stroke="#e0e0e0" stroke-width="1.4"/>
<line x1="669.5" x2="679.0" y1="341.48" y2="341.48" stroke="#bdbdbd" stroke-width="1"/>
<line x1="669.5" x2="675.5" y1="338.96" y2="338.96" stroke="#e0e0e0" stroke-width="1.4"/>
<line x1="669.5" x2="675.5" y1="336.45" y2="336.45" stroke="#e0e0e0" stroke-width="1.4"/>
<line x1="669.5" x2="675.5" y1="333.93" y2="333.93" stroke="#e0e0e0" stroke-width="1.4"/>
<line x1="669.5" x2="675.5" y1="331.42" y2="331.42" stroke="#e0e0e0" stroke-width="1.4"/>
<line x1="669.5" x2="679.0" y1="328.90" y2="328.90" stroke="#bdbdbd" stroke-width="1"/>
<line x1="669.5" x2="675.5" y1="326.38" y2="326.38" stroke="#e0e0e0" stroke-width="1.4"/>
<line x1="669.5" x2="675.5" y1="323.87" y2="323.87" stroke="#e0e0e0" stroke-width="1.4"/>
<line x1="669.5" x2="675.5" y1="321.36" y2="321.36" stroke="#e0e0e0" stroke-width="1.4"/>
<line x1="669.5" x2="675.5" y1="318.84" y2="318.84" stroke="#e0e0e0" stroke-width="1.4"/>
<line x1="669.5" x2="679.0" y1="316.33" y2="316.33" stroke="#bdbdbd" stroke-width="1"/>
<line x1="669.5" x2="675.5" y1="313.81" y2="313.81" stroke="#e0e0e0" stroke-width="1.4"/>
<line x1="669.5" x2="675.5" y1="311.30" y2="311.30" stroke="#e0e0e0" stroke-width="1.4"/>
<line x1="669.5" x2="675.5" y1="308.78" y2="308.78" stroke="#e0e0e0" stroke-width="1.4"/>
<line x1="669.5" x2="675.5" y1="306.26" y2="306.26" stroke="#e0e0e0" stroke-width="1.4"/>
<line x1="669.5" x2="679.0" y1="303.75" y2="303.75" stroke="#bdbdbd" stroke-width="1"/>
<line x1="669.5" x2="675.5" y1="301.24" y2="301.24" stroke="#e0e0e0" stroke-width="1.4"/>
<line x1="669.5" x2="675.5" y1="298.72" y2="298.72" stroke="#e0e0e0" stroke-width="1.4"/>
<line x1="669.5" x2="675.5" y1="296.21" y2="296.21" stroke="#e0e0e0" stroke-width="1.4"/>
<line x1="669.5" x2="675.5" y1="293.69" y2="293.69" stroke="#e0e0e0" stroke-width="1.4"/>
<line x1="669.5" x2="679.0" y1="291.18" y2="291.18" stroke="#bdbdbd" stroke-width="1"/>
<line x1="669.5" x2="675.5" y1="288.66" y2="288.66" stroke="#e0e0e0" stroke-width="1.4"/>
<line x1="669.5" x2="675.5" y1="286.15" y2="286.15" stroke="#e0e0e0" stroke-width="1.4"/>
<line x1="669.5" x2="675.5" y1="283.63" y2="283.63" stroke="#e0e0e0" stroke-width="1.4"/>
<line x1="669.5" x2="675.5" y1="281.12" y2="281.12" stroke="#e0e0e0" stroke-width="1.4"/>
<line x1="669.5" x2="679.0" y1="278.60" y2="278.60" stroke="#bdbdbd" stroke-width="1"/>
<line x1="669.5" x2="675.5" y1="276.09" y2="276.09" stroke="#e0e0e0" stroke-width="1.4"/>
<line x1="669.5" x2="675.5" y1="273.57" y2="273.57" stroke="#e0e0e0" stroke-width="1.4"/>
<line x1="669.5" x2="675.5" y1="271.06" y2="271.06" stroke="#e0e0e0" stroke-width="1.4"/>
<line x1="669.5" x2="675.5" y1="268.54" y2="268.54" stroke="#e0e0e0" stroke-width="1.4"/>
<line x1="669.5" x2="679.0" y1="266.03" y2="266.03" stroke="#bdbdbd" stroke-width="1"/>
<line x1="669.5" x2="675.5" y1="263.51" y2="263.51" stroke="#e0e0e0" stroke-width="1.4"/>
<line x1="669.5" x2="675.5" y1="261.00" y2="261.00" stroke="#e0e0e0" stroke-width="1.4"/>
<line x1="669.5" x2="675.5" y1="258.48" y2="258.48" stroke="#e0e0e0" stroke-width="1.4"/>
<line x1="669.5" x2="675.5" y1="255.97" y2="255.97" stroke="#e0e0e0" stroke-width="1.4"/>
<line x1="669.5" x2="679.0" y1="253.45" y2="253.45" stroke="#bdbdbd" stroke-width="1"/>
<line x1="669.5" x2="675.5" y1="250.94" y2="250.94" stroke="#e0e0e0" stroke-width="1.4"/>
<line x1="669.5" x2="675.5" y1="248.42" y2="248.42" stroke="#e0e0e0" stroke-width="1.4"/>
<line x1="669.5" x2="675.5" y1="245.91" y2="245.91" stroke="#e0e0e0" stroke-width="1.4"/>
<line x1="669.5" x2="675.5" y1="243.39" y2="243.39" stroke="#e0e0e0" stroke-width="1.4"/>
<line x1="669.5" x2="679.0" y1="240.88" y2="240.88" stroke="#bdbdbd" stroke-width="1"/>
<line x1="669.5" x2="675.5" y1="238.36" y2="238.36" stroke="#e0e0e0" stroke-width="1.4"/>
<line x1="669.5" x2="675.5" y1="235.84" y2="235.84" stroke="#e0e0e0" stroke-width="1.4"/>
<line x1="669.5" x2="675.5" y1="233.33" y2="233.33" stroke="#e0e0e0" stroke-width="1.4"/>
<line x1="669.5" x2="675.5" y1="230.81" y2="230.81" stroke="#e0e0e0" stroke-width="1.4"/>
<line x1="669.5" x2="679.0" y1="228.30" y2="228.30" stroke="#bdbdbd" stroke-width="1"/>
<line x1="669.5" x2="675.5" y1="225.79" y2="225.79" stroke="#e0e0e0" stroke-width="1.4"/>
<line x1="669.5" x2="675.5" y1="223.27" y2="223.27" stroke="#e0e0e0" stroke-width="1.4"/>
<line x1="669.5" x2="675.5" y1="220.76" y2="220.76" stroke="#e0e0e0" stroke-width="1.4"/>
<line x1="669.5" x2="675.5" y1="218.24" y2="218.24" stroke="#e0e0e0" stroke-width="1.4"/>
<line x1="669.5" x2="679.0" y1="215.73" y2="215.73" stroke="#bdbdbd" stroke-width="1"/>
<line x1="669.5" x2="675.5" y1="213.21" y2="213.21" stroke="#e0e0e0" stroke-width="1.4"/>
<line x1="669.5" x2="675.5" y1="210.70" y2="210.70" stroke="#e0e0e0" stroke-width="1.4"/>
<line x1="669.5" x2="675.5" y1="208.18" y2="208.18" stroke="#e0e0e0" stroke-width="1.4"/>
<line x1="669.5" x2="675.5" y1="205.67" y2="205.67" stroke="#e0e0e0" stroke-width="1.4"/>
<line x1="669.5" x2="679.0" y1="203.15" y2="203.15" stroke="#bdbdbd" stroke-width="1"/>
<line x1="669.5" x2="675.5" y1="200.64" y2="200.64" stroke="#e0e0e0" stroke-width="1.4"/>
<line x1="669.5" x2="675.5" y1="198.12" y2="198.12" stroke="#e0e0e0" stroke-width="1.4"/>
<line x1="669.5" x2="675.5" y1="195.61" y2="195.61" stroke="#e0e0e0" stroke-width="1.4"/>
<line x1="669.5" x2="675.5" y1="193.09" y2="193.09" stroke="#e0e0e0" stroke-width="1.4"/>
<line x1="669.5" x2="679.0" y1="190.58" y2="190.58" stroke="#bdbdbd" stroke-width="1"/>
<line x1="669.5" x2="675.5" y1="188.06" y2="188.06" stroke="#e0e0e0" stroke-width="1.4"/>
<line x1="669.5" x2="675.5" y1="185.55" y2="185.55" stroke="#e0e0e0" stroke-width="1.4"/>
<line x1="669.5" x2="675.5" y1="183.03" y2="183.03" stroke="#e0e0e0" stroke-width="1.4"/>
<line x1="669.5" x2="675.5" y1="180.52" y2="180.52" stroke="#e0e0e0" stroke-width="1.4"/>
<line x1="669.5" x2="679.0" y1="178.00" y2="178.00" stroke="#bdbdbd" stroke-width="1"/>
<line x1="669.5" x2="675.5" y1="175.49" y2="175.49" stroke="#e0e0e0" stroke-width="1.4"/>
<line x1="669.5" x2="675.5" y1="172.97" y2="172.97" stroke="#e0e0e0" stroke-width="1.4"/>
<line x1="669.5" x2="675.5" y1="170.46" y2="170.46" stroke="#e0e0e0" stroke-width="1.4"/>
<line x1="669.5" x2="675.5" y1="167.94" y2="167.94" stroke="#e0e0e0" stroke-width="1.4"/>
<line x1="669.5" x2="679.0" y1="165.43" y2="165.43" stroke="#bdbdbd" stroke-width="1"/>
<line x1="669.5" x2="675.5" y1="162.91" y2="162.91" stroke="#e0e0e0" stroke-width="1.4"/>
<line x1="669.5" x2="675.5" y1="160.40" y2="160.40" stroke="#e0e0e0" stroke-width="1.4"/>
<line x1="669.5" x2="675.5" y1="157.88" y2="157.88" stroke="#e0e0e0" stroke-width="1.4"/>
<line x1="669.5" x2="675.5" y1="155.37" y2="155.37" stroke="#e0e0e0" stroke-width="1.4"/>
<line x1="669.5" x2="679.0" y1="152.85" y2="152.85" stroke="#bdbdbd" stroke-width="1"/>
<line x1="669.5" x2="675.5" y1="150.34" y2="150.34" stroke="#e0e0e0" stroke-width="1.4"/>
<line x1="669.5" x2="675.5" y1="147.82" y2="147.82" stroke="#e0e0e0" stroke-width="1.4"/>
<line x1="669.5" x2="675.5" y1="145.31" y2="145.31" stroke="#e0e0e0" stroke-width="1.4"/>
<line x1="669.5" x2="675.5" y1="142.79" y2="142.79" stroke="#e0e0e0" stroke-width="1.4"/>
<line x1="669.5" x2="679.0" y1="140.28" y2="140.28" stroke="#bdbdbd" stroke-width="1"/>
<line x1="669.5" x2="675.5" y1="137.76" y2="137.76" stroke="#e0e0e0" stroke-width="1.4"/>
<line x1="669.5" x2="675.5" y1="135.25" y2="135.25" stroke="#e0e0e0" stroke-width="1.4"/>
<line x1="669.5" x2="675.5" y1="132.73" y2="132.73" stroke="#e0e0e0" stroke-width="1.4"/>
<line x1="669.5" x2="675.5" y1="130.22" y2="130.22" stroke="#e0e0e0" stroke-width="1.4"/>
<line x1="669.5" x2="679.0" y1="127.70" y2="127.70" stroke="#bdbdbd" stroke-width="1"/>
<line x1="669.5" x2="675.5" y1="125.19" y2="125.19" stroke="#e0e0e0" stroke-width="1.4"/>
<line x1="669.5" x2="675.5" y1="122.67" y2="122.67" stroke="#e0e0e0" stroke-width="1.4"/>
<line x1="669.5" x2="675.5" y1="120.16" y2="120.16" stroke="#e0e0e0" stroke-width="1.4"/>
<line x1="669.5" x2="675.5" y1="117.64" y2="117.64" stroke="#e0e0e0" stroke-width="1.4"/>
<line x1="669.5" x2="679.0" y1="115.12" y2="115.12" stroke="#bdbdbd" stroke-width="1"/>
<line x1="669.5" x2="675.5" y1="112.61" y2="112.61" stroke="#e0e0e0" stroke-width="1.4"/>
<line x1="669.5" x2="675.5" y1="110.09" y2="110.09" stroke="#e0e0e0" stroke-width="1.4"/>
<line x1="669.5" x2="675.5" y1="107.58" y2="107.58" stroke="#e0e0e0" stroke-width="1.4"/>
<line x1="669.5" x2="675.5" y1="105.07" y2="105.07" stroke="#e0e0e0" stroke-width="1.4"/>
<text transform="translate(25.30,374.6) scale(0.95,1)" text-anchor="middle" font-size="10.3" font-weight="bold" fill="#f0f0f0">Hz</text>
<text transform="translate(64.61,374.6) scale(0.95,1)" text-anchor="middle" font-size="10.3" fill="#8e8e8e">30</text>
<text transform="translate(90.77,374.6) scale(0.95,1)" text-anchor="middle" font-size="10.3" fill="#8e8e8e">40</text>
<text transform="translate(111.06,374.6) scale(0.95,1)" text-anchor="middle" font-size="10.3" fill="#8e8e8e">50</text>
<text transform="translate(127.64,374.6) scale(0.95,1)" text-anchor="middle" font-size="10.3" fill="#8e8e8e">60</text>
<text transform="translate(141.66,374.6) scale(0.95,1)" text-anchor="middle" font-size="10.3" fill="#8e8e8e">70</text>
<text transform="translate(153.81,374.6) scale(0.95,1)" text-anchor="middle" font-size="10.3" fill="#8e8e8e">80</text>
<text transform="translate(174.10,374.6) scale(0.95,1)" text-anchor="middle" font-size="10.3" fill="#f0f0f0" stroke="#f0f0f0" stroke-width="0.35">100</text>
<text transform="translate(237.14,374.6) scale(0.95,1)" text-anchor="middle" font-size="10.3" fill="#8e8e8e">200</text>
<text transform="translate(274.01,374.6) scale(0.95,1)" text-anchor="middle" font-size="10.3" fill="#8e8e8e">300</text>
<text transform="translate(300.17,374.6) scale(0.95,1)" text-anchor="middle" font-size="10.3" fill="#8e8e8e">400</text>
<text transform="translate(320.46,374.6) scale(0.95,1)" text-anchor="middle" font-size="10.3" fill="#8e8e8e">500</text>
<text transform="translate(351.06,374.6) scale(0.95,1)" text-anchor="middle" font-size="10.3" fill="#8e8e8e">700</text>
<text transform="translate(383.50,374.6) scale(0.95,1)" text-anchor="middle" font-size="10.3" fill="#f0f0f0" stroke="#f0f0f0" stroke-width="0.35">1k</text>
<text transform="translate(446.54,374.6) scale(0.95,1)" text-anchor="middle" font-size="10.3" fill="#8e8e8e">2k</text>
<text transform="translate(483.41,374.6) scale(0.95,1)" text-anchor="middle" font-size="10.3" fill="#8e8e8e">3k</text>
<text transform="translate(509.57,374.6) scale(0.95,1)" text-anchor="middle" font-size="10.3" fill="#8e8e8e">4k</text>
<text transform="translate(529.86,374.6) scale(0.95,1)" text-anchor="middle" font-size="10.3" fill="#8e8e8e">5k</text>
<text transform="translate(546.44,374.6) scale(0.95,1)" text-anchor="middle" font-size="10.3" fill="#8e8e8e">6k</text>
<text transform="translate(560.46,374.6) scale(0.95,1)" text-anchor="middle" font-size="10.3" fill="#8e8e8e">7k</text>
<text transform="translate(572.61,374.6) scale(0.95,1)" text-anchor="middle" font-size="10.3" fill="#8e8e8e">8k</text>
<text transform="translate(592.90,374.6) scale(0.95,1)" text-anchor="middle" font-size="10.3" fill="#f0f0f0" stroke="#f0f0f0" stroke-width="0.35">10k</text>
<text transform="translate(655.94,374.6) scale(0.95,1)" text-anchor="middle" font-size="10.3" fill="#8e8e8e">20k</text>
<text transform="translate(683.5,108.8) scale(0.95,1)" font-size="10.3" fill="#cfcfcf">dB</text>
<text transform="translate(683.5,118.92) scale(0.93,1)" font-size="10.3" fill="#cfcfcf">90</text>
<text transform="translate(683.5,131.50) scale(0.93,1)" font-size="10.3" fill="#cfcfcf">80</text>
<text transform="translate(683.5,144.08) scale(0.93,1)" font-size="10.3" fill="#cfcfcf">70</text>
<text transform="translate(683.5,156.65) scale(0.93,1)" font-size="10.3" fill="#cfcfcf">60</text>
<text transform="translate(683.5,169.23) scale(0.93,1)" font-size="10.3" fill="#cfcfcf">50</text>
<text transform="translate(683.5,181.80) scale(0.93,1)" font-size="10.3" fill="#cfcfcf">40</text>
<text transform="translate(683.5,194.38) scale(0.93,1)" font-size="10.3" fill="#cfcfcf">30</text>
<text transform="translate(683.5,206.95) scale(0.93,1)" font-size="10.3" fill="#cfcfcf">20</text>
<text transform="translate(683.5,219.53) scale(0.93,1)" font-size="10.3" fill="#cfcfcf">10</text>
<text transform="translate(683.5,232.10) scale(0.93,1)" font-size="10.3" fill="#cfcfcf">0</text>
<text transform="translate(683.5,244.68) scale(0.93,1)" font-size="10.3" fill="#cfcfcf">-10</text>
<text transform="translate(683.5,257.25) scale(0.93,1)" font-size="10.3" fill="#cfcfcf">-20</text>
<text transform="translate(683.5,269.83) scale(0.93,1)" font-size="10.3" fill="#cfcfcf">-30</text>
<text transform="translate(683.5,282.40) scale(0.93,1)" font-size="10.3" fill="#cfcfcf">-40</text>
<text transform="translate(683.5,294.98) scale(0.93,1)" font-size="10.3" fill="#cfcfcf">-50</text>
<text transform="translate(683.5,307.55) scale(0.93,1)" font-size="10.3" fill="#cfcfcf">-60</text>
<text transform="translate(683.5,320.13) scale(0.93,1)" font-size="10.3" fill="#cfcfcf">-70</text>
<text transform="translate(683.5,332.70) scale(0.93,1)" font-size="10.3" fill="#cfcfcf">-80</text>
<text transform="translate(683.5,345.28) scale(0.93,1)" font-size="10.3" fill="#cfcfcf">-90</text>
</svg>

<div class="sep" style="left:155.3px;top:391px;width:1px;height:86px"></div>
<div class="sep" style="left:225.0px;top:391px;width:1px;height:86px"></div>
<div class="sep" style="left:306.3px;top:391px;width:1px;height:86px"></div>
<div class="sep" style="left:387.0px;top:391px;width:1px;height:86px"></div>
<div class="sep" style="left:468.0px;top:391px;width:1px;height:86px"></div>
<div class="sep" style="left:549.3px;top:391px;width:1px;height:86px"></div>
<div class="sep" style="left:630.6px;top:391px;width:1px;height:86px"></div>
<div class="a" style="left:176.0px;top:453.3px;width:29px;height:22px;background:#2a2a2a;border:1.2px solid #565656;border-radius:2.5px;font-size:11.5px;-webkit-text-stroke:0.3px #f0f0f0;line-height:19.6px;text-align:center;color:#f0f0f0">1</div>
<div class="a" style="left:250.2px;top:453.3px;width:29px;height:22px;background:#2a2a2a;border:1.2px solid #565656;border-radius:2.5px;font-size:11.5px;-webkit-text-stroke:0.3px #f0f0f0;line-height:19.6px;text-align:center;color:#f0f0f0">2</div>
<div class="a" style="left:331.4px;top:453.3px;width:29px;height:22px;background:#1f1f1f;border:1.2px solid #474747;border-radius:2.5px;font-size:11.5px;-webkit-text-stroke:0.3px #48b2fa;line-height:19.6px;text-align:center;color:#48b2fa">3</div>
<div class="a" style="left:412.7px;top:453.3px;width:29px;height:22px;background:#1f1f1f;border:1.2px solid #474747;border-radius:2.5px;font-size:11.5px;-webkit-text-stroke:0.3px #48b2fa;line-height:19.6px;text-align:center;color:#48b2fa">4</div>
<div class="a" style="left:493.6px;top:453.3px;width:29px;height:22px;background:#2a2a2a;border:1.2px solid #565656;border-radius:2.5px;font-size:11.5px;-webkit-text-stroke:0.3px #f0f0f0;line-height:19.6px;text-align:center;color:#f0f0f0">5</div>
<div class="a" style="left:574.4px;top:453.3px;width:29px;height:22px;background:#2a2a2a;border:1.2px solid #565656;border-radius:2.5px;font-size:11.5px;-webkit-text-stroke:0.3px #f0f0f0;line-height:19.6px;text-align:center;color:#f0f0f0">6</div>
<div class="sep" style="left:17px;top:488.5px;width:698px;height:1px"></div>
<div class="a" style="left:58.9px;top:18.9px;width:3.8px;height:1.3px;background:#0b1719"></div>
<div class="a" style="left:206.4px;top:499.7px;width:100.3px;height:21.6px;background:#2b2b2b;border:1px solid #4e4e4e;border-radius:3px"></div>
<svg class="a" style="left:289px;top:504px" width="14" height="12"><path d="M3.3 4.3 L6.8 7.7 L10.3 4.3" fill="none" stroke="#dedede" stroke-width="1.6"/></svg>
<div class="sep" style="left:314.1px;top:499px;width:1px;height:22px"></div>
<div class="a" style="left:325.6px;top:503px;width:16px;height:16px;background:#d4d4d4;border-radius:2px"></div>
<svg class="a" style="left:325.6px;top:503px" width="16" height="16"><path d="M3.6 8.2 L6.6 11.2 L12.4 4.6" fill="none" stroke="#2a2a2a" stroke-width="1.9"/></svg>
<div class="sep" style="left:401.3px;top:499px;width:1px;height:22px"></div>
<div class="a" style="left:408.7px;top:503.2px;width:15.8px;height:15px;border:1.6px solid #cfcfcf;border-radius:1px"></div>
<div class="sep" style="left:17px;top:542.5px;width:700px;height:1px"></div>
<div class="a" style="left:17.6px;top:581.6px;width:20px;height:19.4px;background:#44cc94;border-radius:2px"></div>
<svg class="a" style="left:17.6px;top:581.6px" width="20" height="20"><path d="M7.6 6 A5.7 5.7 0 1 0 14.2 6" fill="none" stroke="#e4f3ec" stroke-width="1.3"/><path d="M10.9 3.6 V10" stroke="#e4f3ec" stroke-width="1.3"/></svg>
<svg class="a" style="left:55px;top:585px" width="16" height="16"><path d="M2.4 2 L13.8 7.3 L2.4 12.6 Z" fill="#e2e2e2"/></svg>
<div class="a" style="left:85px;top:581px;width:31px;height:21.6px;background:#1f1f1f;border:1.2px solid #4c4c4c;border-radius:3px"></div>
<svg class="a" style="left:85px;top:580.8px" width="31" height="22"><path d="M7.1 7.2 H14 V9.9 H10.2 V14.4 H21.7 V10.9 H24.2 V17.2 H7.1 Z" fill="#3ab2f2"/><path d="M13.4 4.5 L21.3 8.4 L13.4 12.1 Z" fill="#3ab2f2"/></svg>
<div class="a" style="left:526.7px;top:579.5px;width:91px;height:21.5px;border:2px solid #c4c4c4;border-radius:11px"></div>
<div class="a" style="left:627.5px;top:579.5px;width:90.5px;height:21.5px;border:2px solid #c4c4c4;border-radius:11px"></div>
<div class="a" style="left:8.48px;top:9.50px;font-size:13px;color:#0b1719;transform:scaleX(0.7246);transform-origin:0 0;-webkit-text-stroke:0.25px #0b1719">エフェクト</div>
<div class="a" style="left:66.15px;top:10.00px;font-size:13px;color:#0b1719;transform:scaleX(0.7267);transform-origin:0 0;-webkit-text-stroke:0.25px #0b1719">ノッチフィルター</div>
<div class="a" style="left:16.65px;top:55.30px;font-size:13px;color:#cdcdcd;transform:scaleX(0.6492);transform-origin:0 0;-webkit-text-stroke:0.25px #cdcdcd">プリセット</div>
<div class="a" style="left:64.45px;top:57.10px;font-size:12px;color:#cdcdcd;transform:scaleX(1.0000);transform-origin:0 0">:</div>
<div class="a" style="left:80.30px;top:58.55px;font-size:10.5px;-webkit-text-stroke:0.35px #f4f4f4;color:#f4f4f4;transform:scaleX(1.0500);transform-origin:0 0">880Hz</div>
<div class="a" style="left:111.83px;top:55.70px;font-size:13px;color:#f4f4f4;transform:scaleX(0.9750);transform-origin:0 0;-webkit-text-stroke:0.25px #f4f4f4">除去</div>
<div class="a" style="left:110.02px;top:395.50px;font-size:13px;color:#cdcdcd;transform:scaleX(0.9838);transform-origin:0 0;-webkit-text-stroke:0.25px #cdcdcd">周波数</div>
<div class="a" style="left:120.60px;top:425.60px;font-size:13px;color:#cdcdcd;transform:scaleX(0.7053);transform-origin:0 0;-webkit-text-stroke:0.25px #cdcdcd">ゲイン</div>
<div class="a" style="left:122.50px;top:456.30px;font-size:13px;color:#cdcdcd;transform:scaleX(0.9958);transform-origin:0 0;-webkit-text-stroke:0.25px #cdcdcd">有効</div>
<div class="a" style="left:152.09px;top:503.00px;font-size:13px;color:#cdcdcd;transform:scaleX(0.7041);transform-origin:0 0;-webkit-text-stroke:0.25px #cdcdcd">ノッチ幅</div>
<div class="a" style="left:194.50px;top:505.10px;font-size:12px;color:#cdcdcd;transform:scaleX(1.0000);transform-origin:0 0">:</div>
<div class="a" style="left:215.00px;top:502.50px;font-size:13px;color:#f2f2f2;transform:scaleX(0.8828);transform-origin:0 0;-webkit-text-stroke:0.25px #f2f2f2">非常に狭い</div>
<div class="a" style="left:343.75px;top:502.90px;font-size:13px;color:#cdcdcd;transform:scaleX(0.7262);transform-origin:0 0;-webkit-text-stroke:0.25px #cdcdcd">ノイズレス</div>
<div class="a" style="left:427.30px;top:502.90px;font-size:13px;color:#cdcdcd;transform:scaleX(0.7390);transform-origin:0 0;-webkit-text-stroke:0.25px #cdcdcd">ゲインを固定</div>
<div class="a" style="left:490.95px;top:504.90px;font-size:12px;color:#cdcdcd;transform:scaleX(1.0000);transform-origin:0 0">:</div>
<div class="a" style="left:516.96px;top:505.60px;font-size:11px;color:#6a6a6a;transform:scaleX(1.0370);transform-origin:0 0">30 dB</div>
<div class="a" style="left:20.70px;top:557.10px;font-size:13px;color:#cdcdcd;transform:scaleX(0.8759);transform-origin:0 0;-webkit-text-stroke:0.25px #cdcdcd">入力:</div>
<div class="a" style="left:49.25px;top:559.50px;font-size:11px;font-weight:bold;color:#cdcdcd;transform:scaleX(0.9526);transform-origin:0 0">L, R</div>
<div class="a" style="left:70.50px;top:557.40px;font-size:13px;color:#cdcdcd;transform:scaleX(1.0000);transform-origin:0 0">|</div>
<div class="a" style="left:76.34px;top:557.10px;font-size:13px;color:#cdcdcd;transform:scaleX(0.9643);transform-origin:0 0;-webkit-text-stroke:0.25px #cdcdcd">出力:</div>
<div class="a" style="left:105.87px;top:559.50px;font-size:11px;font-weight:bold;color:#cdcdcd;transform:scaleX(0.9316);transform-origin:0 0">L, R</div>
<div class="a" style="left:559.20px;top:582.70px;font-size:13px;color:#e4e4e4;transform:scaleX(1.0042);transform-origin:0 0;-webkit-text-stroke:0.25px #e4e4e4">適用</div>
<div class="a" style="left:658.48px;top:581.70px;font-size:13px;color:#e4e4e4;transform:scaleX(0.8194);transform-origin:0 0;-webkit-text-stroke:0.25px #e4e4e4">閉じる</div>
<div class="a" style="left:179.21px;top:398.50px;font-size:11.5px;color:#6f6f6f;transform:scaleX(0.9909);transform-origin:0 0">999.1 Hz</div>
<div class="a" style="left:180.43px;top:427.00px;font-size:11.5px;color:#6f6f6f;transform:scaleX(0.9667);transform-origin:0 0">-96.0 dB</div>
<div class="a" style="left:260.52px;top:398.50px;font-size:11.5px;color:#6f6f6f;transform:scaleX(0.9750);transform-origin:0 0">927.6 Hz</div>
<div class="a" style="left:260.91px;top:427.00px;font-size:11.5px;color:#6f6f6f;transform:scaleX(0.9857);transform-origin:0 0">-96.0 dB</div>
<div class="a" style="left:341.34px;top:398.50px;font-size:11.5px;font-weight:bold;color:#d2d2d2;transform:scaleX(0.9644);transform-origin:0 0"><span style="color:#48b2fa">840.1</span> <span style="color:#d2d2d2">Hz</span></div>
<div class="a" style="left:341.64px;top:426.60px;font-size:11.5px;font-weight:bold;color:#d2d2d2;transform:scaleX(0.9581);transform-origin:0 0"><span style="color:#48b2fa">-96.0</span> <span style="color:#d2d2d2">dB</span></div>
<div class="a" style="left:422.02px;top:398.50px;font-size:11.5px;font-weight:bold;color:#d2d2d2;transform:scaleX(0.9778);transform-origin:0 0"><span style="color:#48b2fa">880.0</span> <span style="color:#d2d2d2">Hz</span></div>
<div class="a" style="left:422.94px;top:426.60px;font-size:11.5px;font-weight:bold;color:#d2d2d2;transform:scaleX(0.9558);transform-origin:0 0"><span style="color:#48b2fa">-95.1</span> <span style="color:#d2d2d2">dB</span></div>
<div class="a" style="left:503.31px;top:398.30px;font-size:11.5px;color:#6f6f6f;transform:scaleX(0.9886);transform-origin:0 0">300.0 Hz</div>
<div class="a" style="left:504.42px;top:427.20px;font-size:11.5px;color:#6f6f6f;transform:scaleX(0.9762);transform-origin:0 0">-16.0 dB</div>
<div class="a" style="left:584.31px;top:398.30px;font-size:11.5px;color:#6f6f6f;transform:scaleX(0.9909);transform-origin:0 0">360.0 Hz</div>
<div class="a" style="left:585.32px;top:427.20px;font-size:11.5px;color:#6f6f6f;transform:scaleX(0.9762);transform-origin:0 0">-12.0 dB</div>
<svg class="a" style="left:0;top:0" width="732" height="607"><circle cx="389.8" cy="408.1" r="93.2" fill="none" stroke="#ff00ff" stroke-width="4.1"/></svg>
</body></html>
